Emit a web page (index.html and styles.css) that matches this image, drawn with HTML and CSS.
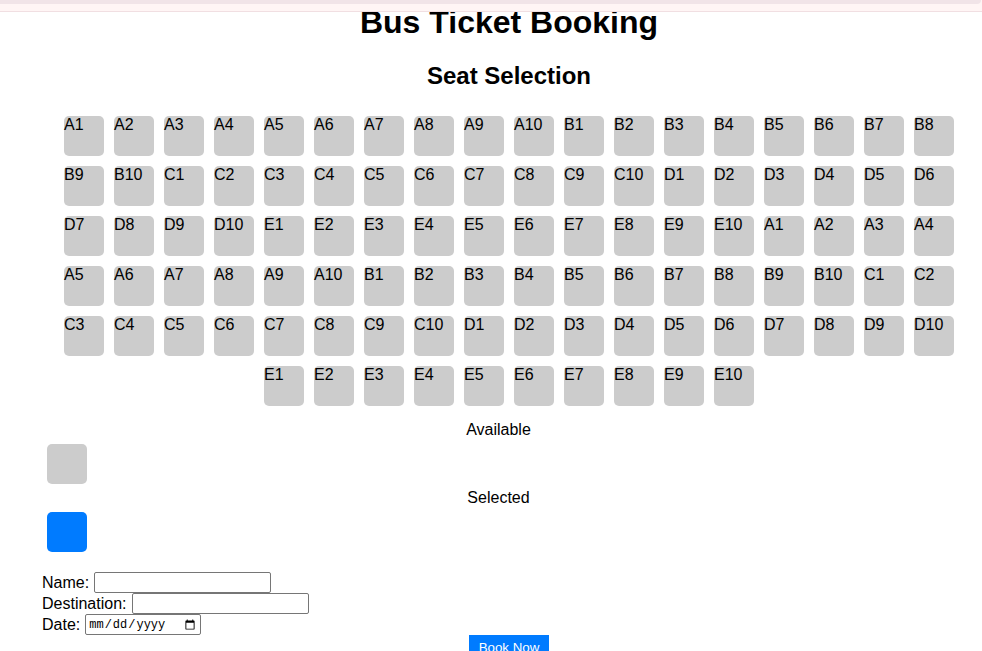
FILE: index.html
```html
<!DOCTYPE html>
<html lang="en">
<head>
<meta charset="utf-8">
<title>Bus Ticket Booking</title>
<link rel="stylesheet" href="styles.css">
</head>
<body>
<div class="topbar"><div class="topbar-band"></div></div>
<div class="page">
  <h1 class="title">Bus Ticket Booking</h1>
  <h2 class="subtitle">Seat Selection</h2>
  <div class="seats">
    <div class="seat">A1</div><div class="seat">A2</div><div class="seat">A3</div><div class="seat">A4</div><div class="seat">A5</div><div class="seat">A6</div><div class="seat">A7</div><div class="seat">A8</div><div class="seat">A9</div><div class="seat">A10</div>
    <div class="seat">B1</div><div class="seat">B2</div><div class="seat">B3</div><div class="seat">B4</div><div class="seat">B5</div><div class="seat">B6</div><div class="seat">B7</div><div class="seat">B8</div><div class="seat">B9</div><div class="seat">B10</div>
    <div class="seat">C1</div><div class="seat">C2</div><div class="seat">C3</div><div class="seat">C4</div><div class="seat">C5</div><div class="seat">C6</div><div class="seat">C7</div><div class="seat">C8</div><div class="seat">C9</div><div class="seat">C10</div>
    <div class="seat">D1</div><div class="seat">D2</div><div class="seat">D3</div><div class="seat">D4</div><div class="seat">D5</div><div class="seat">D6</div><div class="seat">D7</div><div class="seat">D8</div><div class="seat">D9</div><div class="seat">D10</div>
    <div class="seat">E1</div><div class="seat">E2</div><div class="seat">E3</div><div class="seat">E4</div><div class="seat">E5</div><div class="seat">E6</div><div class="seat">E7</div><div class="seat">E8</div><div class="seat">E9</div><div class="seat">E10</div>
    <div class="seat">A1</div><div class="seat">A2</div><div class="seat">A3</div><div class="seat">A4</div><div class="seat">A5</div><div class="seat">A6</div><div class="seat">A7</div><div class="seat">A8</div><div class="seat">A9</div><div class="seat">A10</div>
    <div class="seat">B1</div><div class="seat">B2</div><div class="seat">B3</div><div class="seat">B4</div><div class="seat">B5</div><div class="seat">B6</div><div class="seat">B7</div><div class="seat">B8</div><div class="seat">B9</div><div class="seat">B10</div>
    <div class="seat">C1</div><div class="seat">C2</div><div class="seat">C3</div><div class="seat">C4</div><div class="seat">C5</div><div class="seat">C6</div><div class="seat">C7</div><div class="seat">C8</div><div class="seat">C9</div><div class="seat">C10</div>
    <div class="seat">D1</div><div class="seat">D2</div><div class="seat">D3</div><div class="seat">D4</div><div class="seat">D5</div><div class="seat">D6</div><div class="seat">D7</div><div class="seat">D8</div><div class="seat">D9</div><div class="seat">D10</div>
    <div class="seat">E1</div><div class="seat">E2</div><div class="seat">E3</div><div class="seat">E4</div><div class="seat">E5</div><div class="seat">E6</div><div class="seat">E7</div><div class="seat">E8</div><div class="seat">E9</div><div class="seat">E10</div>
  </div>
  <div class="legend">
    <div class="legend-label">Available</div>
    <div class="legend-box legend-box-available"></div>
    <div class="legend-label">Selected</div>
    <div class="legend-box legend-box-selected"></div>
  </div>
  <form class="form">
    <div class="form-row"><label for="name">Name:</label><input class="field" type="text" id="name"></div>
    <div class="form-row"><label for="dest">Destination:</label><input class="field" type="text" id="dest"></div>
    <div class="form-row"><label for="date">Date:</label><input class="field field-date" type="date" id="date"></div>
    <div class="actions"><button class="book-btn" type="button">Book Now</button></div>
  </form>
</div>
</body>
</html>
```

FILE: styles.css
```css
html, body {
  margin: 0;
  padding: 0;
  background: #ffffff;
}

body {
  font-family: "Liberation Sans", Arial, sans-serif;
  font-size: 16px;
  color: #000000;
}

.topbar {
  position: fixed;
  top: 0;
  left: 0;
  right: 0;
  height: 11px;
  background: #fff5f5;
  border-bottom: 1px solid #f1dfe2;
  z-index: 10;
}

.topbar-band {
  height: 4px;
  background: #f1e4e8;
  border-bottom-right-radius: 6px;
  margin-right: 1px;
}

.page {
  padding-left: 36px;
}

.title {
  margin: 4px 0 0;
  font-size: 32px;
  line-height: 37px;
  font-weight: bold;
  text-align: center;
}

.subtitle {
  margin: 21px 0 0;
  font-size: 24px;
  line-height: 28px;
  font-weight: bold;
  text-align: center;
}

.seats {
  margin-top: 21px;
  display: flex;
  flex-wrap: wrap;
  justify-content: center;
}

.seat {
  width: 40px;
  height: 40px;
  margin: 5px;
  background: #cccccc;
  border-radius: 5px;
  font-size: 16px;
  line-height: 18px;
}

.legend {
  margin-top: 10px;
}

.legend-label {
  text-align: center;
  line-height: 18px;
  margin-right: 21px;
}

.legend-box {
  width: 40px;
  height: 40px;
  margin: 5px 0 5px 11px;
  border-radius: 5px;
}

.legend-box-available {
  background: #cccccc;
}

.legend-box-selected {
  background: #007bff;
}

.form {
  margin: 20px 0 0;
}

.form-row {
  display: flex;
  align-items: center;
  gap: 5px;
  height: 21px;
  padding-left: 6px;
}

.form-row label {
  font-size: 16px;
  line-height: 18px;
}

.field {
  box-sizing: border-box;
  width: 177px;
  height: 21px;
  margin: 0;
  padding: 1px 2px;
  border: 1px solid #767676;
  border-radius: 2px;
  font-family: "Liberation Sans", Arial, sans-serif;
  font-size: 13.33px;
  background: #ffffff;
}

.field-date {
  width: 116px;
  font-family: "Liberation Mono", "DejaVu Sans Mono", monospace;
  font-size: 12px;
}

.actions {
  text-align: center;
}

.book-btn {
  margin: 0;
  padding: 5px 10px;
  border: none;
  border-radius: 0;
  background: #007bff;
  color: #ffffff;
  font-family: "Liberation Sans", Arial, sans-serif;
  font-size: 13.33px;
  line-height: 16px;
}
```
